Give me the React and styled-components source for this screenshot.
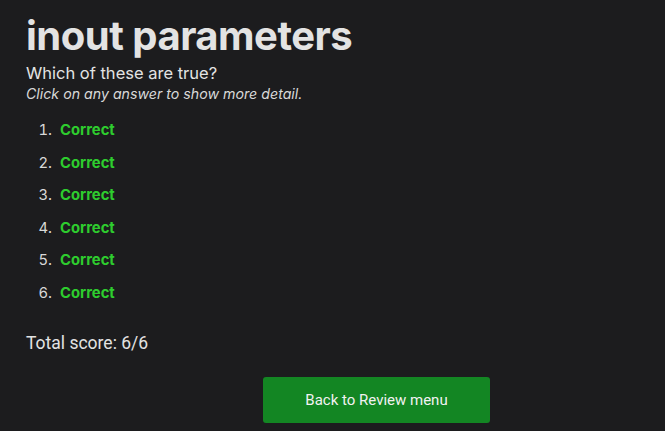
import React from "react";
import styled, { createGlobalStyle } from "styled-components";

const GlobalStyle = createGlobalStyle`
  html, body {
    margin: 0;
    padding: 0;
    background: #1c1c1e;
  }
  body {
    font-family: Inter, "Noto Sans", sans-serif;
    color: #e3e3e3;
  }
`;

const Page = styled.div`
  min-height: 431px;
  padding: 12px 26px 0 26px;
  box-sizing: border-box;
  background: #1c1c1e;
`;

const Title = styled.h1`
  margin: 0;
  font-size: 40px;
  font-weight: 700;
  line-height: 48px;
  color: #e3e3e3;
  letter-spacing: -0.5px;
`;

const Question = styled.p`
  margin: 2px 0 0 0;
  font-size: 16.5px;
  line-height: 22px;
`;

const Hint = styled.p`
  margin: 1px 0 0 0;
  font-size: 14.2px;
  font-style: italic;
  line-height: 18px;
  color: #d8d8d8;
`;

const Answers = styled.ol`
  margin: 19px 0 0 0;
  padding-left: 30px;
  display: flex;
  flex-direction: column;
  gap: 15.6px;
  font-family: Inter, sans-serif;
`;

const Answer = styled.li`
  font-size: 14.8px;
  line-height: 17px;
  color: #d8d8d8;
  padding-left: 4px;
  cursor: pointer;
`;

const Verdict = styled.span`
  font-weight: 700;
  color: ${(p) => (p.$ok ? "#2ecc2e" : "#e04040")};
`;

const Score = styled.p`
  margin: 31px 0 0 0;
  font-family: Roboto, Inter, sans-serif;
  font-size: 17.5px;
  line-height: 20px;
  color: #e3e3e3;
`;

const Actions = styled.div`
  display: flex;
  padding-left: 237px;
  margin-top: 24px;
`;

const Button = styled.button`
  width: 227px;
  height: 46px;
  border: none;
  border-radius: 3px;
  background: #138623;
  color: #f2f2f2;
  font-family: Roboto, Inter, sans-serif;
  font-size: 15px;
  cursor: pointer;
`;

const results = [true, true, true, true, true, true];

export default function App() {
  const total = results.filter(Boolean).length;
  return (
    <>
      <GlobalStyle />
      <Page>
        <Title>inout parameters</Title>
        <Question>Which of these are true?</Question>
        <Hint>Click on any answer to show more detail.</Hint>
        <Answers>
          {results.map((ok, i) => (
            <Answer key={i}>
              <Verdict $ok={ok}>{ok ? "Correct" : "Incorrect"}</Verdict>
            </Answer>
          ))}
        </Answers>
        <Score>
          Total score: {total}/{results.length}
        </Score>
        <Actions>
          <Button>Back to Review menu</Button>
        </Actions>
      </Page>
    </>
  );
}
